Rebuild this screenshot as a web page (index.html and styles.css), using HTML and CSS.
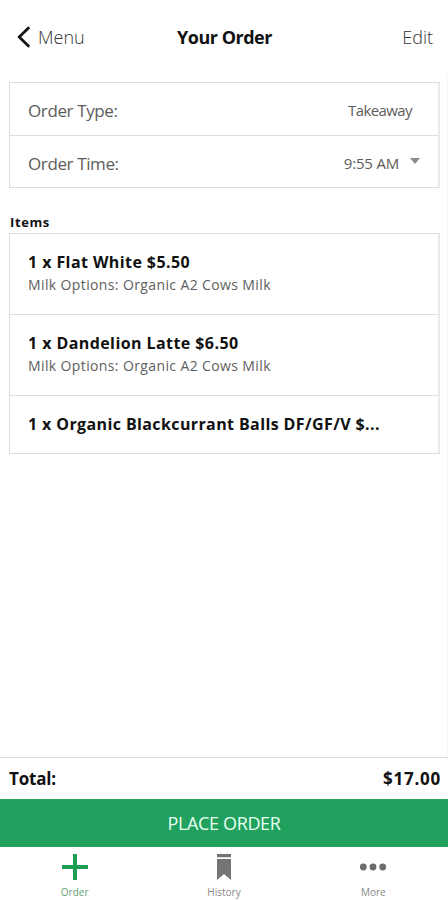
FILE: index.html
```html
<!DOCTYPE html>
<html lang="en">
<head>
<meta charset="utf-8">
<title>Your Order</title>
<link rel="stylesheet" href="styles.css">
</head>
<body>
<div class="app">
  <header class="header">
    <a class="back"><svg width="14" height="22" viewBox="0 0 14 22"><path d="M12.2 1.2 2.2 11l10 9.8" fill="none" stroke="#111" stroke-width="2.7"/></svg><span class="menu">Menu</span></a>
    <h1 class="title">Your Order</h1>
    <a class="edit">Edit</a>
  </header>
  <main class="content">
    <section class="card details">
      <div class="row"><span class="label">Order Type:</span><span class="value type">Takeaway</span></div>
      <div class="row"><span class="label">Order Time:</span><span class="value time">9:55 AM</span><svg class="caret" width="10" height="6" viewBox="0 0 10 6"><path d="M0 0h10L5 6z" fill="#8c8c8c"/></svg></div>
    </section>
    <h2 class="section-title">Items</h2>
    <section class="card">
      <div class="item"><div class="name">1 x Flat White $5.50</div><div class="option">Milk Options: Organic A2 Cows Milk</div></div>
      <div class="item"><div class="name">1 x Dandelion Latte $6.50</div><div class="option">Milk Options: Organic A2 Cows Milk</div></div>
      <div class="item single"><div class="name balls">1 x Organic Blackcurrant Balls DF/GF/V $...</div></div>
    </section>
  </main>
  <div class="total"><span class="total-label">Total:</span><span class="amount">$17.00</span></div>
  <button class="place"><span>PLACE ORDER</span></button>
  <nav class="tabs">
    <a class="tab active"><svg width="28" height="28" viewBox="0 0 28 28"><path d="M14 1v26M1 14h26" fill="none" stroke="#1a9f55" stroke-width="4"/></svg><span>Order</span></a>
    <a class="tab"><svg width="28" height="28" viewBox="0 0 28 28"><path d="M7 1h14v3.2H7zM7 6h14v21l-7-6-7 6z" fill="#747474"/></svg><span class="history">History</span></a>
    <a class="tab"><svg width="28" height="28" viewBox="0 0 28 28"><g fill="#6c6c6c"><circle cx="4.3" cy="14" r="3.4"/><circle cx="14" cy="14" r="3.4"/><circle cx="23.7" cy="14" r="3.4"/></g></svg><span class="more">More</span></a>
  </nav>
</div>
</body>
</html>
```

FILE: styles.css
```css
* { box-sizing: border-box; }
body { margin: 0; background: #fff; color: #111; font-family: "Open Sans", "Noto Sans", sans-serif; }
svg { display: block; flex: none; }
.app { width: 448px; height: 900px; display: flex; flex-direction: column; overflow: hidden; }
.header { height: 74px; padding: 0 15px 0 17px; display: grid; grid-template-columns: 1fr auto 1fr; align-items: center; flex: none; }
.back { display: flex; align-items: center; gap: 7px; }
.menu, .edit { font-size: 18px; line-height: 24px; color: #333; font-weight: 300; }
.edit { text-align: right; }
.title { margin: 0 1px 0 0; font-size: 18px; line-height: 24px; font-weight: 700; letter-spacing: -0.5px; }
.content { flex: 1; padding: 8px 7px 0 9px; border-right: 1px solid #f6f6f6; }
.card { border: 1px solid #ddd; border-right: 2px solid #e9e9e9; }
.details { height: 106px; }
.row { height: 52px; display: flex; align-items: center; padding: 2px 18px 0; color: #5c5c5c; }
.row + .row { border-top: 1px solid #ddd; height: 53px; }
.label { font-size: 17px; letter-spacing: -0.38px; flex: 1; }
.value { font-size: 15px; margin-top: -1px; letter-spacing: -0.2px; }
.type { margin-right: 8px; letter-spacing: -0.6px; }
.caret { margin: -4px 0 0 11px; }
.section-title { margin: 25px 0 1px 1px; font-size: 13px; line-height: 19px; font-weight: 700; letter-spacing: 0.6px; }
.item { height: 80px; padding: 16px 18px 0; }
.item + .item { border-top: 1px solid #ddd; height: 81px; }
.item.single { height: 58px; }
.name { font-size: 16px; line-height: 24px; font-weight: 700; letter-spacing: 0.42px; white-space: nowrap; }
.balls { letter-spacing: 0.39px; }
.option { font-size: 14px; line-height: 22px; letter-spacing: 0.38px; color: #606060; white-space: nowrap; }
.total { height: 42px; border-top: 1px solid #ddd; display: flex; align-items: center; justify-content: space-between; padding: 0 7px 0 9px; font-size: 17px; font-weight: 700; }
.total-label { letter-spacing: -0.2px; }
.amount { letter-spacing: 0.75px; }
.place { border: 0; margin: 0; padding: 0; width: 448px; height: 48px; background: #20a25e; color: #e8fff0; font: 400 18px "Open Sans", sans-serif; letter-spacing: -0.35px; }
.tabs { height: 53px; display: grid; grid-template-columns: repeat(3, 1fr); width: 448px; }
.tab { display: flex; flex-direction: column; align-items: center; padding-top: 6px; font-size: 10px; line-height: 14px; color: #888; }
.tab span { margin-top: 4px; }
.active { color: #65a275; }
```
